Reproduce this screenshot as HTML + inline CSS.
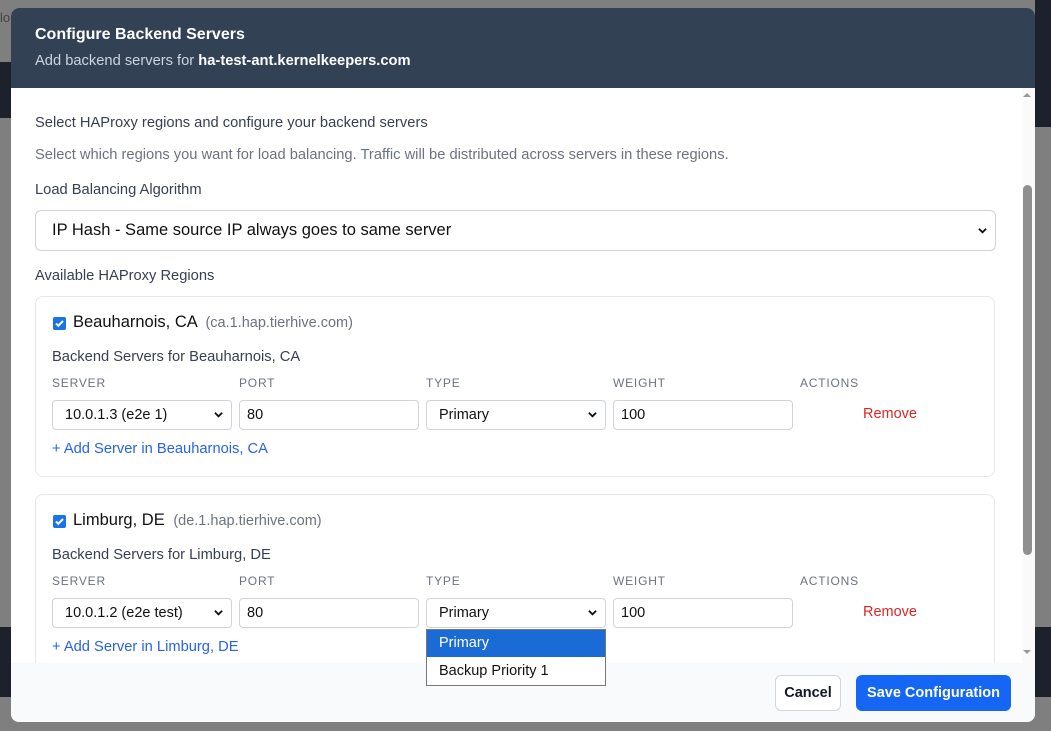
<!DOCTYPE html>
<html><head><meta charset="utf-8"><style>
*{box-sizing:border-box;margin:0;padding:0}
body{width:1051px;height:731px;overflow:hidden;background:#7f7f7f;font-family:"Liberation Sans",sans-serif;position:relative;color:#1f2937}
.a{position:absolute;white-space:nowrap}
.bg{position:absolute;background:#1c212b}
.modal{position:absolute;left:11px;top:8px;width:1024px;height:714px;background:#fff;border-radius:8px;overflow:hidden}
.hdr{position:absolute;left:0;top:0;width:1024px;height:80px;background:#334155}
.ft{position:absolute;left:0;top:655px;width:1024px;height:59px;background:#f9fafb}
.t14{font-size:14.7px}
.lbl{font-size:12px;letter-spacing:.8px;color:#6b7280}
.inp{position:absolute;height:30px;border:1px solid #cfd4da;border-radius:4px;background:#fff;font-size:14.5px;color:#111;padding-left:12px;line-height:28px}
.chev{position:absolute;right:8px;top:9px;width:9px;height:9px}
.card{position:absolute;left:24px;width:960px;border:1px solid #e5e7eb;border-radius:8px}
.cb{position:absolute;width:13px;height:13px;background:#1a73e8;border-radius:2px}
.cb svg{position:absolute;left:1px;top:1px}
.link{font-size:14.7px;color:#2563eb}
.rm{font-size:14.5px;color:#dc2626}
</style></head><body>
<div class="bg" style="left:0;top:62px;width:11px;height:56px"></div>
<div class="bg" style="left:1035px;top:0;width:16px;height:127px"></div>
<div class="bg" style="left:0;top:627px;width:11px;height:70px"></div>
<div class="bg" style="left:1035px;top:627px;width:16px;height:70px"></div>
<div class="a" style="left:0;top:10px;font-size:13px;color:#444">lo</div>

<div class="modal">
<div class="hdr">
<div class="a" style="left:24px;top:18px;font-size:16px;font-weight:bold;color:#fff">Configure Backend Servers</div>
<div class="a" style="left:24px;top:45px;font-size:14.7px;color:#cbd5e1">Add backend servers for <b style="color:#fff">ha-test-ant.kernelkeepers.com</b></div>
</div>

<div class="a t14" style="left:24px;top:107px;color:#374151">Select HAProxy regions and configure your backend servers</div>
<div class="a t14" style="left:24px;top:139px;color:#6b7280">Select which regions you want for load balancing. Traffic will be distributed across servers in these regions.</div>
<div class="a t14" style="left:24px;top:174px;color:#374151">Load Balancing Algorithm</div>
<div class="inp" style="left:24px;top:202px;width:961px;height:41px;border-radius:6px;font-size:16.5px;line-height:39px;padding-left:16px">IP Hash - Same source IP always goes to same server
<svg class="chev" style="top:15px;right:8px" viewBox="0 0 10 10"><path d="M1 3l4 4 4-4" stroke="#111" stroke-width="2" fill="none"/></svg></div>
<div class="a t14" style="left:24px;top:260px;color:#374151">Available HAProxy Regions</div>

<!-- card 1 -->
<div class="card" style="top:288px;height:181px"></div>
<div class="cb" style="left:42px;top:309px"><svg width="11" height="11" viewBox="0 0 11 11"><path d="M2 5.5l2.3 2.3L9 3" stroke="#fff" stroke-width="2" fill="none"/></svg></div>
<div class="a" style="left:62px;top:305px;font-size:16.5px;color:#111">Beauharnois, CA <span style="font-size:14.5px;color:#6b7280">&nbsp;(ca.1.hap.tierhive.com)</span></div>
<div class="a t14" style="left:41px;top:341px;color:#374151">Backend Servers for Beauharnois, CA</div>
<div class="a lbl" style="left:41px;top:368px">SERVER</div>
<div class="a lbl" style="left:228px;top:368px">PORT</div>
<div class="a lbl" style="left:415px;top:368px">TYPE</div>
<div class="a lbl" style="left:602px;top:368px">WEIGHT</div>
<div class="a lbl" style="left:789px;top:368px">ACTIONS</div>
<div class="inp" style="left:41px;top:392px;width:180px">10.0.1.3 (e2e 1)<svg class="chev" viewBox="0 0 10 10"><path d="M1 3l4 4 4-4" stroke="#111" stroke-width="2" fill="none"/></svg></div>
<div class="inp" style="left:228px;top:392px;width:180px;padding-left:7px">80</div>
<div class="inp" style="left:415px;top:392px;width:180px">Primary<svg class="chev" viewBox="0 0 10 10"><path d="M1 3l4 4 4-4" stroke="#111" stroke-width="2" fill="none"/></svg></div>
<div class="inp" style="left:602px;top:392px;width:180px;padding-left:7px">100</div>
<div class="a rm" style="left:852px;top:398px">Remove</div>
<div class="a link" style="left:41px;top:433px">+ Add Server in Beauharnois, CA</div>

<!-- card 2 -->
<div class="card" style="top:486px;height:200px"></div>
<div class="cb" style="left:42px;top:507px"><svg width="11" height="11" viewBox="0 0 11 11"><path d="M2 5.5l2.3 2.3L9 3" stroke="#fff" stroke-width="2" fill="none"/></svg></div>
<div class="a" style="left:62px;top:503px;font-size:16.5px;color:#111">Limburg, DE <span style="font-size:14.5px;color:#6b7280">&nbsp;(de.1.hap.tierhive.com)</span></div>
<div class="a t14" style="left:41px;top:539px;color:#374151">Backend Servers for Limburg, DE</div>
<div class="a lbl" style="left:41px;top:566px">SERVER</div>
<div class="a lbl" style="left:228px;top:566px">PORT</div>
<div class="a lbl" style="left:415px;top:566px">TYPE</div>
<div class="a lbl" style="left:602px;top:566px">WEIGHT</div>
<div class="a lbl" style="left:789px;top:566px">ACTIONS</div>
<div class="inp" style="left:41px;top:590px;width:180px">10.0.1.2 (e2e test)<svg class="chev" viewBox="0 0 10 10"><path d="M1 3l4 4 4-4" stroke="#111" stroke-width="2" fill="none"/></svg></div>
<div class="inp" style="left:228px;top:590px;width:180px;padding-left:7px">80</div>
<div class="inp" style="left:415px;top:590px;width:180px">Primary<svg class="chev" viewBox="0 0 10 10"><path d="M1 3l4 4 4-4" stroke="#111" stroke-width="2" fill="none"/></svg></div>
<div class="inp" style="left:602px;top:590px;width:180px;padding-left:7px">100</div>
<div class="a rm" style="left:852px;top:596px">Remove</div>
<div class="a link" style="left:41px;top:631px">+ Add Server in Limburg, DE</div>

<!-- scrollbar -->
<div class="a" style="left:1011px;top:80px;width:13px;height:575px;background:#fafafa"></div>
<div class="a" style="left:1012px;top:177px;width:9px;height:370px;background:#8f8f8f;border-radius:5px"></div>
<div class="a" style="left:1012px;top:85px;width:0;height:0;border-left:4px solid transparent;border-right:4px solid transparent;border-bottom:4px solid #999"></div>
<div class="a" style="left:1012px;top:642px;width:0;height:0;border-left:4px solid transparent;border-right:4px solid transparent;border-top:4px solid #999"></div>

<div class="ft">
<div class="a" style="left:764px;top:12px;width:66px;height:36px;border:1px solid #d1d5db;border-radius:6px;background:#fff;font-size:14.5px;font-weight:bold;color:#111827;text-align:center;line-height:34px">Cancel</div>
<div class="a" style="left:845px;top:12px;width:155px;height:36px;border-radius:6px;background:#1566f5;font-size:14.5px;font-weight:bold;color:#fff;text-align:center;line-height:36px">Save Configuration</div>
</div>

<!-- dropdown -->
<div class="a" style="left:415px;top:621px;width:180px;height:57px;background:#fff;border:1px solid #777">
<div style="height:27px;background:#1a6bd6;color:#fff;font-size:14.5px;line-height:27px;padding-left:12px">Primary</div>
<div style="height:28px;color:#111;font-size:14.5px;line-height:28px;padding-left:12px">Backup Priority 1</div>
</div>
</div>
</body></html>
